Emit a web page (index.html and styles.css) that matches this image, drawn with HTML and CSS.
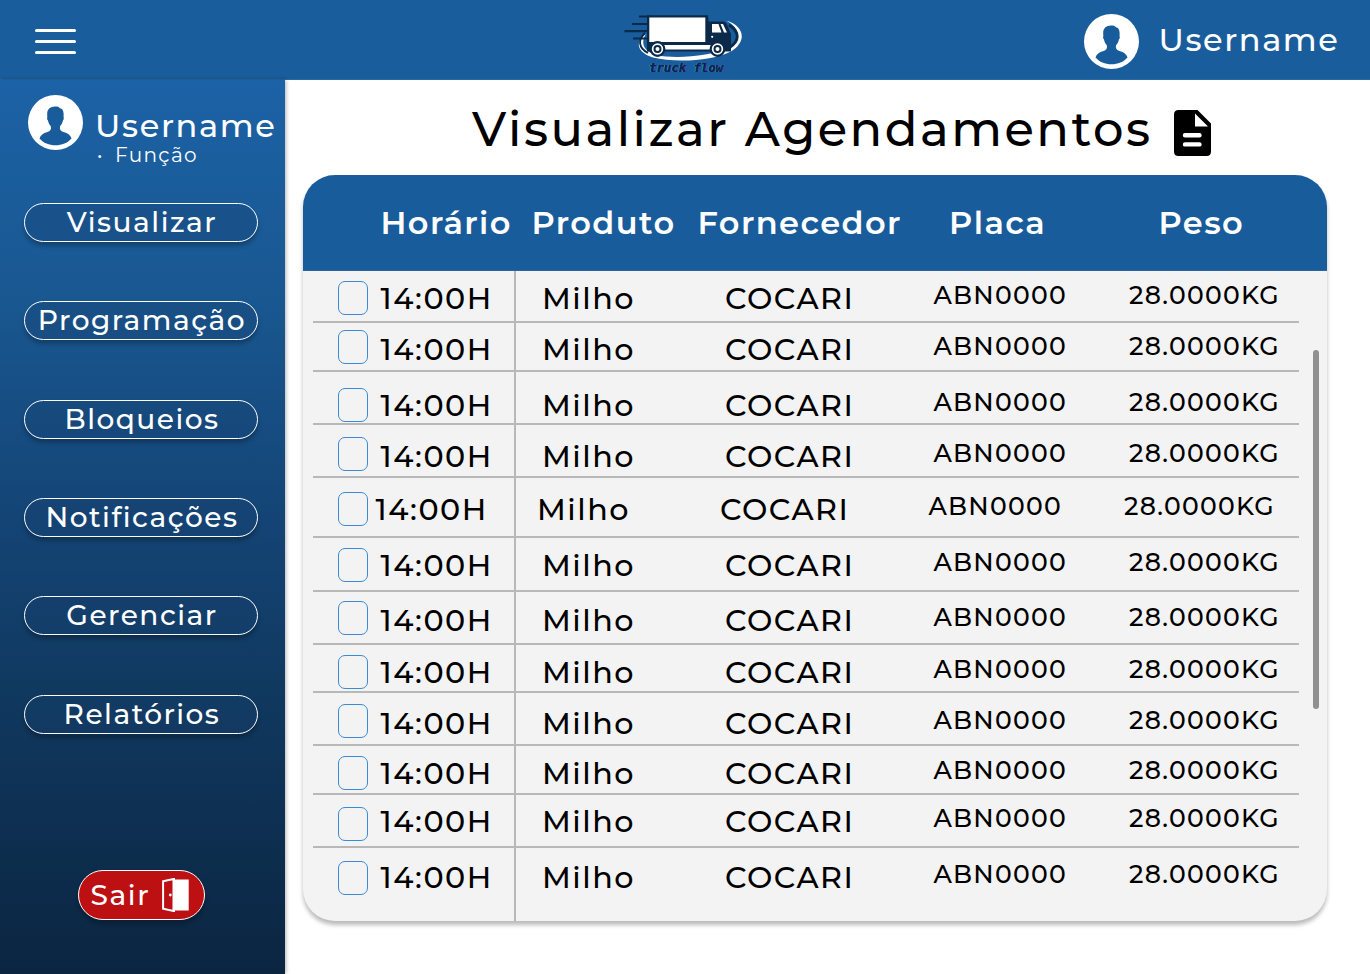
FILE: index.html
```html
<!DOCTYPE html>
<html lang="pt-BR">
<head>
<meta charset="utf-8">
<title>Truck Flow - Visualizar Agendamentos</title>
<link rel="stylesheet" href="styles.css">
</head>
<body>
<svg width="0" height="0" class="defs" aria-hidden="true">
  <symbol id="avatar" viewBox="0 0 55 55">
    <circle cx="27.5" cy="27.5" r="27.5" fill="#fff"/>
    <path fill="#195c9b" d="M27.3 11.6C22 11.6 19 14.5 19.2 19.5L19.3 22.500C18.900 22.800 19 24.800 20 25.600C20.500 28 21.400 29.800 22.800 31.300C23.500 34.500 22.300 36.200 19.500 37C15 38.300 12.500 40 11.500 43.500C15.500 48 21 50.300 27.500 50.300C34 50.300 39.500 48 43.500 43.500C42.500 40 40 38.300 35.500 37C32.700 36.200 31.300 34.500 32 31.300C33.500 29.800 34.400 28 34.900 25.600C35.900 24.800 36 22.800 35.600 22.500L35.600 18.500C35.400 15.500 34.200 13.500 32 13.300C31 12 29.500 11.600 27.300 11.600Z"/>
  </symbol>
</svg>
<header class="topbar">
  <button class="menu" aria-label="Menu"><span></span><span></span><span></span></button>
  <svg class="logo" viewBox="620 8 126 70" width="126" height="70" role="img" aria-label="truck flow">
    <path d="M646 34C635 41 636 52 653 57.500C675 63 713 61 731 51.500C747 42 745 26 726 20.500C739 27 743 39 729 48C711 56 676 59.500 656 55C642 50.500 641 42 646 34Z" fill="#fff"/>
    <path d="M645 33C637.500 40 638.500 48 648 53" fill="none" stroke="#0b2a4a" stroke-width="1.800"/>
    <path d="M729 25C740 32 740 41 729 48" fill="none" stroke="#0b2a4a" stroke-width="2.800"/>
    <path d="M639 16.500H650M632 24H648M624.500 31.200H648M633 38.500H648" stroke="#0b2a4a" stroke-width="2.200"/>
    <path d="M647 15.200H708.300V21.500H723Q726 21.500 727.200 25L731 34V51.500H647Z" fill="#0b2a4a"/>
    <path d="M708.300 15H730V20.800H708.300Z" fill="#195d9c"/>
    <rect x="649.300" y="17.500" width="56" height="24.500" fill="#fff"/>
    <path d="M707.500 18V42" stroke="#0b2a4a" stroke-width="1.800"/>
    <path d="M712 24H718.500L721.500 32.500H712ZM720.500 24H723L727 32.500H724Z" fill="#fff"/>
    <circle cx="712.200" cy="36.800" r="1.100" fill="#fff"/>
    <rect x="660" y="45" width="51" height="4.500" fill="#fff"/>
    <g stroke="#0b2a4a" stroke-width="2.200"><circle cx="657.500" cy="49" r="6.800" fill="#fff"/><circle cx="717.500" cy="49" r="6.800" fill="#fff"/></g>
    <g fill="#fff" stroke="#0b2a4a" stroke-width="2"><circle cx="657.500" cy="49" r="3"/><circle cx="717.500" cy="49" r="3"/></g>
    <text class="logo-text" x="649" y="71.500" textLength="74" lengthAdjust="spacingAndGlyphs">truck flow</text>
  </svg>
  <div class="account">
    <svg class="avatar"><use href="#avatar"/></svg>
    <span class="username">Username</span>
  </div>
</header>
<div class="body">
  <aside class="sidebar">
    <div class="profile">
      <svg class="avatar"><use href="#avatar"/></svg>
      <div>
        <div class="username">Username</div>
        <div class="role"><span class="dot">•</span><span>Função</span></div>
      </div>
    </div>
    <nav class="nav">
      <a>Visualizar</a>
      <a>Programação</a>
      <a>Bloqueios</a>
      <a>Notificações</a>
      <a>Gerenciar</a>
      <a>Relatórios</a>
    </nav>
    <button class="logout"><span>Sair</span>
      <svg viewBox="0 0 27 34" width="27" height="34"><path d="M11 1.500H26.700V32.500H11Z" fill="#fff"/><path d="M1.100 3.300L11.500 1V33L1.100 30.700Z" fill="#bc1012" stroke="#fff" stroke-width="2"/><path d="M11 0V34H13V0Z" fill="#fff"/><circle cx="8.300" cy="17" r="1.400" fill="#fff"/></svg>
    </button>
  </aside>
  <main class="main">
    <h1 class="title"><span>Visualizar Agendamentos</span>
      <svg viewBox="0 0 37 46" width="37" height="46"><path fill="#000" fill-rule="evenodd" d="M4.500 0H23.500L37 13.500V41.500Q37 46 32.500 46H4.500Q0 46 0 41.500V4.500Q0 0 4.500 0ZM21 3.500V16.500H34ZM11 23A2.200 2.200 0 0 0 11 27.400H25.500A2.200 2.200 0 0 0 25.500 23ZM11 32.200A2.200 2.200 0 0 0 11 36.600H25.500A2.200 2.200 0 0 0 25.500 32.200Z"/></svg>
    </h1>
    <section class="table">
      <div class="thead">
        <span>Horário</span><span>Produto</span><span>Fornecedor</span><span>Placa</span><span>Peso</span>
      </div>
      <div class="tbody">
        <div class="rows">
          <div class="row r1"><div class="time"><i class="check"></i><span>14:00H</span></div><span class="product">Milho</span><span class="supplier">COCARI</span><span class="plate">ABN0000</span><span class="weight">28.0000KG</span></div>
          <div class="row r2"><div class="time"><i class="check"></i><span>14:00H</span></div><span class="product">Milho</span><span class="supplier">COCARI</span><span class="plate">ABN0000</span><span class="weight">28.0000KG</span></div>
          <div class="row r3"><div class="time"><i class="check"></i><span>14:00H</span></div><span class="product">Milho</span><span class="supplier">COCARI</span><span class="plate">ABN0000</span><span class="weight">28.0000KG</span></div>
          <div class="row r4"><div class="time"><i class="check"></i><span>14:00H</span></div><span class="product">Milho</span><span class="supplier">COCARI</span><span class="plate">ABN0000</span><span class="weight">28.0000KG</span></div>
          <div class="row r5"><div class="time"><i class="check"></i><span>14:00H</span></div><span class="product">Milho</span><span class="supplier">COCARI</span><span class="plate">ABN0000</span><span class="weight">28.0000KG</span></div>
          <div class="row r6"><div class="time"><i class="check"></i><span>14:00H</span></div><span class="product">Milho</span><span class="supplier">COCARI</span><span class="plate">ABN0000</span><span class="weight">28.0000KG</span></div>
          <div class="row r7"><div class="time"><i class="check"></i><span>14:00H</span></div><span class="product">Milho</span><span class="supplier">COCARI</span><span class="plate">ABN0000</span><span class="weight">28.0000KG</span></div>
          <div class="row r8"><div class="time"><i class="check"></i><span>14:00H</span></div><span class="product">Milho</span><span class="supplier">COCARI</span><span class="plate">ABN0000</span><span class="weight">28.0000KG</span></div>
          <div class="row r9"><div class="time"><i class="check"></i><span>14:00H</span></div><span class="product">Milho</span><span class="supplier">COCARI</span><span class="plate">ABN0000</span><span class="weight">28.0000KG</span></div>
          <div class="row r10"><div class="time"><i class="check"></i><span>14:00H</span></div><span class="product">Milho</span><span class="supplier">COCARI</span><span class="plate">ABN0000</span><span class="weight">28.0000KG</span></div>
          <div class="row r11"><div class="time"><i class="check"></i><span>14:00H</span></div><span class="product">Milho</span><span class="supplier">COCARI</span><span class="plate">ABN0000</span><span class="weight">28.0000KG</span></div>
          <div class="row r12"><div class="time"><i class="check"></i><span>14:00H</span></div><span class="product">Milho</span><span class="supplier">COCARI</span><span class="plate">ABN0000</span><span class="weight">28.0000KG</span></div>
        </div>
        <div class="scrollbar"></div>
      </div>
    </section>
  </main>
</div>
</body>
</html>
```
FILE: styles.css
```css
* { box-sizing: border-box; }
body {
  margin: 0;
  width: 1370px;
  height: 974px;
  overflow: hidden;
  background: #fff;
  color: #000;
  font-family: Montserrat, Inter, "Noto Sans", sans-serif;
  font-weight: 500;
}
button { font: inherit; padding: 0; border: 0; background: none; color: inherit; }
span { white-space: nowrap; letter-spacing: .05em; }
.defs { display: block; }

/* Top bar */
.topbar {
  height: 80px;
  display: grid;
  grid-template-columns: 620px 126px 1fr;
  background: #195d9c;
  border-bottom: 1px solid #2a69a4;
}
.menu { display: flex; flex-direction: column; gap: 8px; margin: 29px 0 0 35px; width: 41px; }
.menu span { height: 3px; border-radius: 2px; background: #fff; }
.logo { margin-top: 8px; }
.logo-text {
  font: italic 700 13px "DejaVu Sans Mono", monospace;
  fill: #0b2146;
  text-shadow: -1px 0 #0e8fae, 1px 0 #51309a;
}
.account { display: flex; align-items: flex-start; margin-left: 338px; padding-top: 14px; gap: 19.500px; color: #fff; }
.avatar { width: 55px; height: 55px; flex: none; }
.username { font-size: 32px; line-height: 36px; letter-spacing: .0525em; color: #fff; }
.account .username { margin-top: 8px; letter-spacing: .05em; }

.body { display: flex; height: 894px; }

/* Sidebar */
.sidebar {
  width: 285px;
  flex: none;
  background: linear-gradient(#1c62a6, #195790 25%, #144577 48%, #103960 68%, #0b2541);
  box-shadow: 1px 0 4px rgba(0, 0, 0, .3);
  color: #fff;
}
.profile { display: flex; gap: 12px; padding: 15px 0 0 28px; height: 123px; }
.profile .username { margin-top: 13px; }
.role { display: flex; font-size: 20px; font-weight: 400; line-height: 22px; }
.role span { letter-spacing: 1.350px; }
.role .dot { width: 20px; font-size: 18px; padding-left: 2px; letter-spacing: 0; line-height: 24px; }
.nav { display: flex; flex-direction: column; gap: 59.350px; margin-left: 24px; width: 234px; }
.nav a {
  height: 39px;
  border: 1px solid #fff;
  border-radius: 20px;
  background: rgba(24, 66, 112, .32);
  box-shadow: 0 4px 4px rgba(0, 0, 0, .25);
  font-size: 28px;
  line-height: 37.500px;
  letter-spacing: 1.500px;
  text-align: center;
  padding-left: 2px;
}
.logout {
  display: flex;
  align-items: center;
  width: 127px;
  height: 50px;
  margin: 136px 0 0 78px;
  border: 1px solid #fff;
  border-radius: 25px;
  background: #bc1012;
  box-shadow: 0 4px 4px rgba(0, 0, 0, .25);
  padding-left: 11.500px;
}
.logout span { width: 71.500px; text-align: left; font-size: 28px; letter-spacing: 1.600px; }

/* Content */
.main { flex: 1; padding-left: 18px; }
.title { display: flex; margin: 0 0 0 169px; height: 95px; font-size: 48px; font-weight: 500; line-height: 60px; }
.title span { width: 702px; letter-spacing: 2.500px; padding-top: 18.500px; }
.title svg { margin-top: 29.500px; }
.table {
  width: 1024px;
  height: 746px;
  border-radius: 32px;
  overflow: hidden;
  background: #f3f3f3;
  box-shadow: 0 4px 4px rgba(0, 0, 0, .27);
}
.thead {
  height: 96px;
  display: grid;
  grid-template-columns: 151px 166px 251.500px 209.500px 1fr;
  padding: 28px 0 0 77.500px;
  background: #195c9b;
  border-bottom: 1px solid #2866a1;
  color: #fff;
  font-size: 32px;
  font-weight: 600;
  line-height: 40px;
}
.thead span { letter-spacing: 1.450px; }
.tbody { display: flex; padding-left: 10px; }
.rows { width: 986px; }
.row {
  --shift: 0px;
  display: grid;
  grid-template-columns: 203px 209px 208.500px 195.500px 170px;
  height: var(--h);
  border-bottom: 2px solid #b8b8b8;
  font-size: 30.200px;
  line-height: 30px;
}
.row > span { margin: var(--t) 0 0 var(--shift); }
.time { display: flex; padding-left: 25px; border-right: 2px solid #b8b8b8; }
.time span { margin: var(--t) 0 0 calc(12.500px + var(--shift)); }
.check { width: 30px; height: 34px; margin-top: var(--c); border: 1px solid #3b8ad6; border-radius: 7px; }
.product { padding-left: 26px; }
.row .plate, .row .weight { font-size: 25.100px; margin-top: calc(var(--t) - 4px); }
.r1 { --h: 52px; --c: 10px; --t: 12.500px; }
.r2 { --h: 49px; --c: 7px; --t: 12px; }
.r3 { --h: 53px; --c: 16px; --t: 18.500px; }
.r4 { --h: 53px; --c: 12px; --t: 16.500px; }
.row.r5 { --h: 60px; --c: 14px; --t: 16.500px; --shift: -5px; }
.r6 { --h: 54px; --c: 10px; --t: 12.500px; }
.r7 { --h: 53px; --c: 9px; --t: 13.500px; }
.r8 { --h: 48px; --c: 10px; --t: 12.500px; }
.r9 { --h: 53px; --c: 11px; --t: 15.500px; }
.r10 { --h: 49px; --c: 10px; --t: 12.500px; }
.r11 { --h: 53px; --c: 12px; --t: 12px; }
.r12 { --h: 74px; --c: 13px; --t: 14.500px; border-bottom: 0; }
.scrollbar { width: 6px; height: 359px; margin: 79px 0 0 14px; border-radius: 3px; background: #919090; }
```
